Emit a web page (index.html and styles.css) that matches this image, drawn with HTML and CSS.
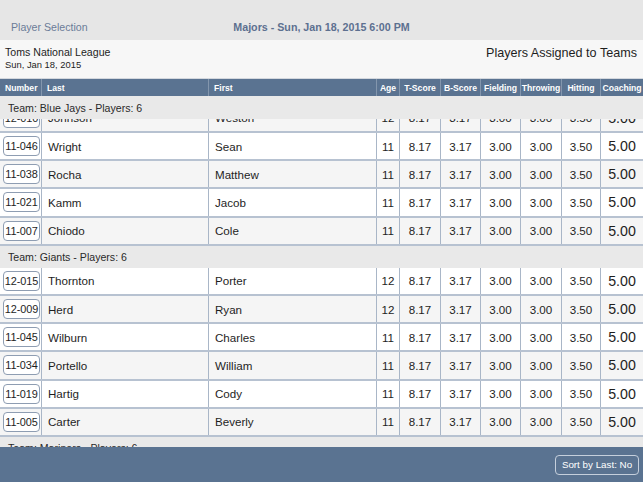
FILE: index.html
```html
<!DOCTYPE html>
<html>
<head>
<meta charset="utf-8">
<link rel="stylesheet" href="styles.css">
</head>
<body>
<div class="app">
  <div class="topbar">
    <div class="back">Player Selection</div>
    <div class="title">Majors - Sun, Jan 18, 2015 6:00 PM</div>
    <div></div>
  </div>
  <div class="subheader">
    <div class="league">
      <div class="league-name">Toms National League</div>
      <div class="league-date">Sun, Jan 18, 2015</div>
    </div>
    <div class="assigned">Players Assigned to Teams</div>
  </div>
  <div class="grid head">
    <div class="hc">Number</div>
    <div class="hc">Last</div>
    <div class="hc">First</div>
    <div class="hc c">Age</div>
    <div class="hc c">T-Score</div>
    <div class="hc c">B-Score</div>
    <div class="hc c">Fielding</div>
    <div class="hc c">Throwing</div>
    <div class="hc c">Hitting</div>
    <div class="hc c">Coaching</div>
  </div>
  <div class="viewport">
    <div class="team">Team: Blue Jays - Players: 6</div>
    <div class="clip">
      <div class="grid row alt">
        <div class="cell num"><span class="badge">12-010</span></div>
        <div class="cell name">Johnson</div>
        <div class="cell name">Weston</div>
        <div class="cell c">12</div>
        <div class="cell c">8.17</div>
        <div class="cell c">3.17</div>
        <div class="cell c">3.00</div>
        <div class="cell c">3.00</div>
        <div class="cell c">3.50</div>
        <div class="cell c big">5.00</div>
      </div>
    </div>
    <div class="grid row">
      <div class="cell num"><span class="badge">11-046</span></div>
      <div class="cell name">Wright</div>
      <div class="cell name">Sean</div>
      <div class="cell c">11</div>
      <div class="cell c">8.17</div>
      <div class="cell c">3.17</div>
      <div class="cell c">3.00</div>
      <div class="cell c">3.00</div>
      <div class="cell c">3.50</div>
      <div class="cell c big">5.00</div>
    </div>
    <div class="grid row alt">
      <div class="cell num"><span class="badge">11-038</span></div>
      <div class="cell name">Rocha</div>
      <div class="cell name">Matthew</div>
      <div class="cell c">11</div>
      <div class="cell c">8.17</div>
      <div class="cell c">3.17</div>
      <div class="cell c">3.00</div>
      <div class="cell c">3.00</div>
      <div class="cell c">3.50</div>
      <div class="cell c big">5.00</div>
    </div>
    <div class="grid row">
      <div class="cell num"><span class="badge">11-021</span></div>
      <div class="cell name">Kamm</div>
      <div class="cell name">Jacob</div>
      <div class="cell c">11</div>
      <div class="cell c">8.17</div>
      <div class="cell c">3.17</div>
      <div class="cell c">3.00</div>
      <div class="cell c">3.00</div>
      <div class="cell c">3.50</div>
      <div class="cell c big">5.00</div>
    </div>
    <div class="grid row alt">
      <div class="cell num"><span class="badge">11-007</span></div>
      <div class="cell name">Chiodo</div>
      <div class="cell name">Cole</div>
      <div class="cell c">11</div>
      <div class="cell c">8.17</div>
      <div class="cell c">3.17</div>
      <div class="cell c">3.00</div>
      <div class="cell c">3.00</div>
      <div class="cell c">3.50</div>
      <div class="cell c big">5.00</div>
    </div>
    <div class="team">Team: Giants - Players: 6</div>
    <div class="grid row">
      <div class="cell num"><span class="badge">12-015</span></div>
      <div class="cell name">Thornton</div>
      <div class="cell name">Porter</div>
      <div class="cell c">12</div>
      <div class="cell c">8.17</div>
      <div class="cell c">3.17</div>
      <div class="cell c">3.00</div>
      <div class="cell c">3.00</div>
      <div class="cell c">3.50</div>
      <div class="cell c big">5.00</div>
    </div>
    <div class="grid row alt">
      <div class="cell num"><span class="badge">12-009</span></div>
      <div class="cell name">Herd</div>
      <div class="cell name">Ryan</div>
      <div class="cell c">12</div>
      <div class="cell c">8.17</div>
      <div class="cell c">3.17</div>
      <div class="cell c">3.00</div>
      <div class="cell c">3.00</div>
      <div class="cell c">3.50</div>
      <div class="cell c big">5.00</div>
    </div>
    <div class="grid row">
      <div class="cell num"><span class="badge">11-045</span></div>
      <div class="cell name">Wilburn</div>
      <div class="cell name">Charles</div>
      <div class="cell c">11</div>
      <div class="cell c">8.17</div>
      <div class="cell c">3.17</div>
      <div class="cell c">3.00</div>
      <div class="cell c">3.00</div>
      <div class="cell c">3.50</div>
      <div class="cell c big">5.00</div>
    </div>
    <div class="grid row alt">
      <div class="cell num"><span class="badge">11-034</span></div>
      <div class="cell name">Portello</div>
      <div class="cell name">William</div>
      <div class="cell c">11</div>
      <div class="cell c">8.17</div>
      <div class="cell c">3.17</div>
      <div class="cell c">3.00</div>
      <div class="cell c">3.00</div>
      <div class="cell c">3.50</div>
      <div class="cell c big">5.00</div>
    </div>
    <div class="grid row">
      <div class="cell num"><span class="badge">11-019</span></div>
      <div class="cell name">Hartig</div>
      <div class="cell name">Cody</div>
      <div class="cell c">11</div>
      <div class="cell c">8.17</div>
      <div class="cell c">3.17</div>
      <div class="cell c">3.00</div>
      <div class="cell c">3.00</div>
      <div class="cell c">3.50</div>
      <div class="cell c big">5.00</div>
    </div>
    <div class="grid row alt">
      <div class="cell num"><span class="badge">11-005</span></div>
      <div class="cell name">Carter</div>
      <div class="cell name">Beverly</div>
      <div class="cell c">11</div>
      <div class="cell c">8.17</div>
      <div class="cell c">3.17</div>
      <div class="cell c">3.00</div>
      <div class="cell c">3.00</div>
      <div class="cell c">3.50</div>
      <div class="cell c big">5.00</div>
    </div>
    <div class="team">Team: Mariners - Players: 6</div>
  </div>
  <div class="bottombar">
    <button class="sort">Sort by Last: No</button>
  </div>
</div>
</body>
</html>
```

FILE: styles.css
```css
* { box-sizing: border-box; }
html, body { margin: 0; padding: 0; }
body {
  font-family: "Liberation Sans", Arial, sans-serif;
  color: #1e1e1e;
  background: #ffffff;
}
.app {
  width: 643px;
  height: 482px;
  display: flex;
  flex-direction: column;
  overflow: hidden;
}
.topbar {
  height: 40px;
  flex: none;
  background: #e6e6e6;
  display: grid;
  grid-template-columns: 1fr auto 1fr;
  align-items: center;
  padding-top: 13px;
}
.back {
  font-size: 10.6px;
  color: #6b7c98;
  padding-left: 11px;
}
.title {
  font-size: 10.7px;
  font-weight: bold;
  color: #5d7090;
}
.subheader {
  height: 39px;
  flex: none;
  background: #f7f7f7;
  border-bottom: 1px solid #d4d8de;
  display: flex;
  justify-content: space-between;
  padding: 6px 6px 0 5px;
}
.league-name {
  font-size: 10.6px;
  line-height: 13px;
}
.league-date {
  font-size: 9.4px;
  line-height: 12px;
}
.assigned {
  font-size: 12.6px;
  line-height: 15px;
}
.grid {
  display: grid;
  grid-template-columns: 42px 167px 168px 23px 41px 40px 40px 41px 39px 42px;
}
.head {
  height: 17px;
  flex: none;
  background: #5a7391;
  color: #ffffff;
  font-size: 8.6px;
  font-weight: bold;
}
.hc {
  display: flex;
  align-items: center;
  padding-left: 5px;
  border-right: 1px solid #8396ad;
}
.hc.c { justify-content: center; padding-left: 0; }
.hc:last-child { border-right: none; }
.viewport {
  flex: 1;
  overflow: hidden;
  background: #e9e9e9;
}
.team {
  height: 22px;
  background: #e9e9e9;
  font-size: 10.6px;
  color: #2a2a2a;
  display: flex;
  align-items: center;
  padding-left: 8px;
}
.viewport > .team:first-child { height: 23px; }
.clip {
  height: 14px;
  overflow: hidden;
  display: flex;
  flex-direction: column;
  justify-content: flex-end;
}
.row {
  height: 28.2px;
  flex: none;
  background: #ffffff;
  border-bottom: 2px solid #b7c2d1;
}
.row.alt { background: #f5f5f5; }
.cell {
  display: flex;
  align-items: center;
  border-right: 1px solid #a9b6c7;
  font-size: 11.6px;
  color: #1e1e1e;
}
.cell:last-child { border-right: none; }
.cell.c { justify-content: center; }
.cell.name { padding-left: 6px; }
.cell.big { font-size: 14.2px; }
.cell.num { padding-left: 3px; }
.badge {
  display: inline-flex;
  align-items: center;
  justify-content: center;
  width: 37px;
  height: 20px;
  border: 1px solid #8e9db2;
  border-radius: 4px;
  font-size: 10.9px;
  letter-spacing: -0.1px;
  background: #ffffff;
}
.bottombar {
  height: 35px;
  flex: none;
  background: #5a7391;
  display: flex;
  justify-content: flex-end;
  align-items: center;
  padding: 0 4px 0 0;
}
.sort {
  font-family: "Liberation Sans", Arial, sans-serif;
  font-size: 9.8px;
  color: #ffffff;
  background: transparent;
  border: 1px solid #c5cfdc;
  border-radius: 4px;
  height: 20px;
  width: 84px;
  padding: 0;
}
```
